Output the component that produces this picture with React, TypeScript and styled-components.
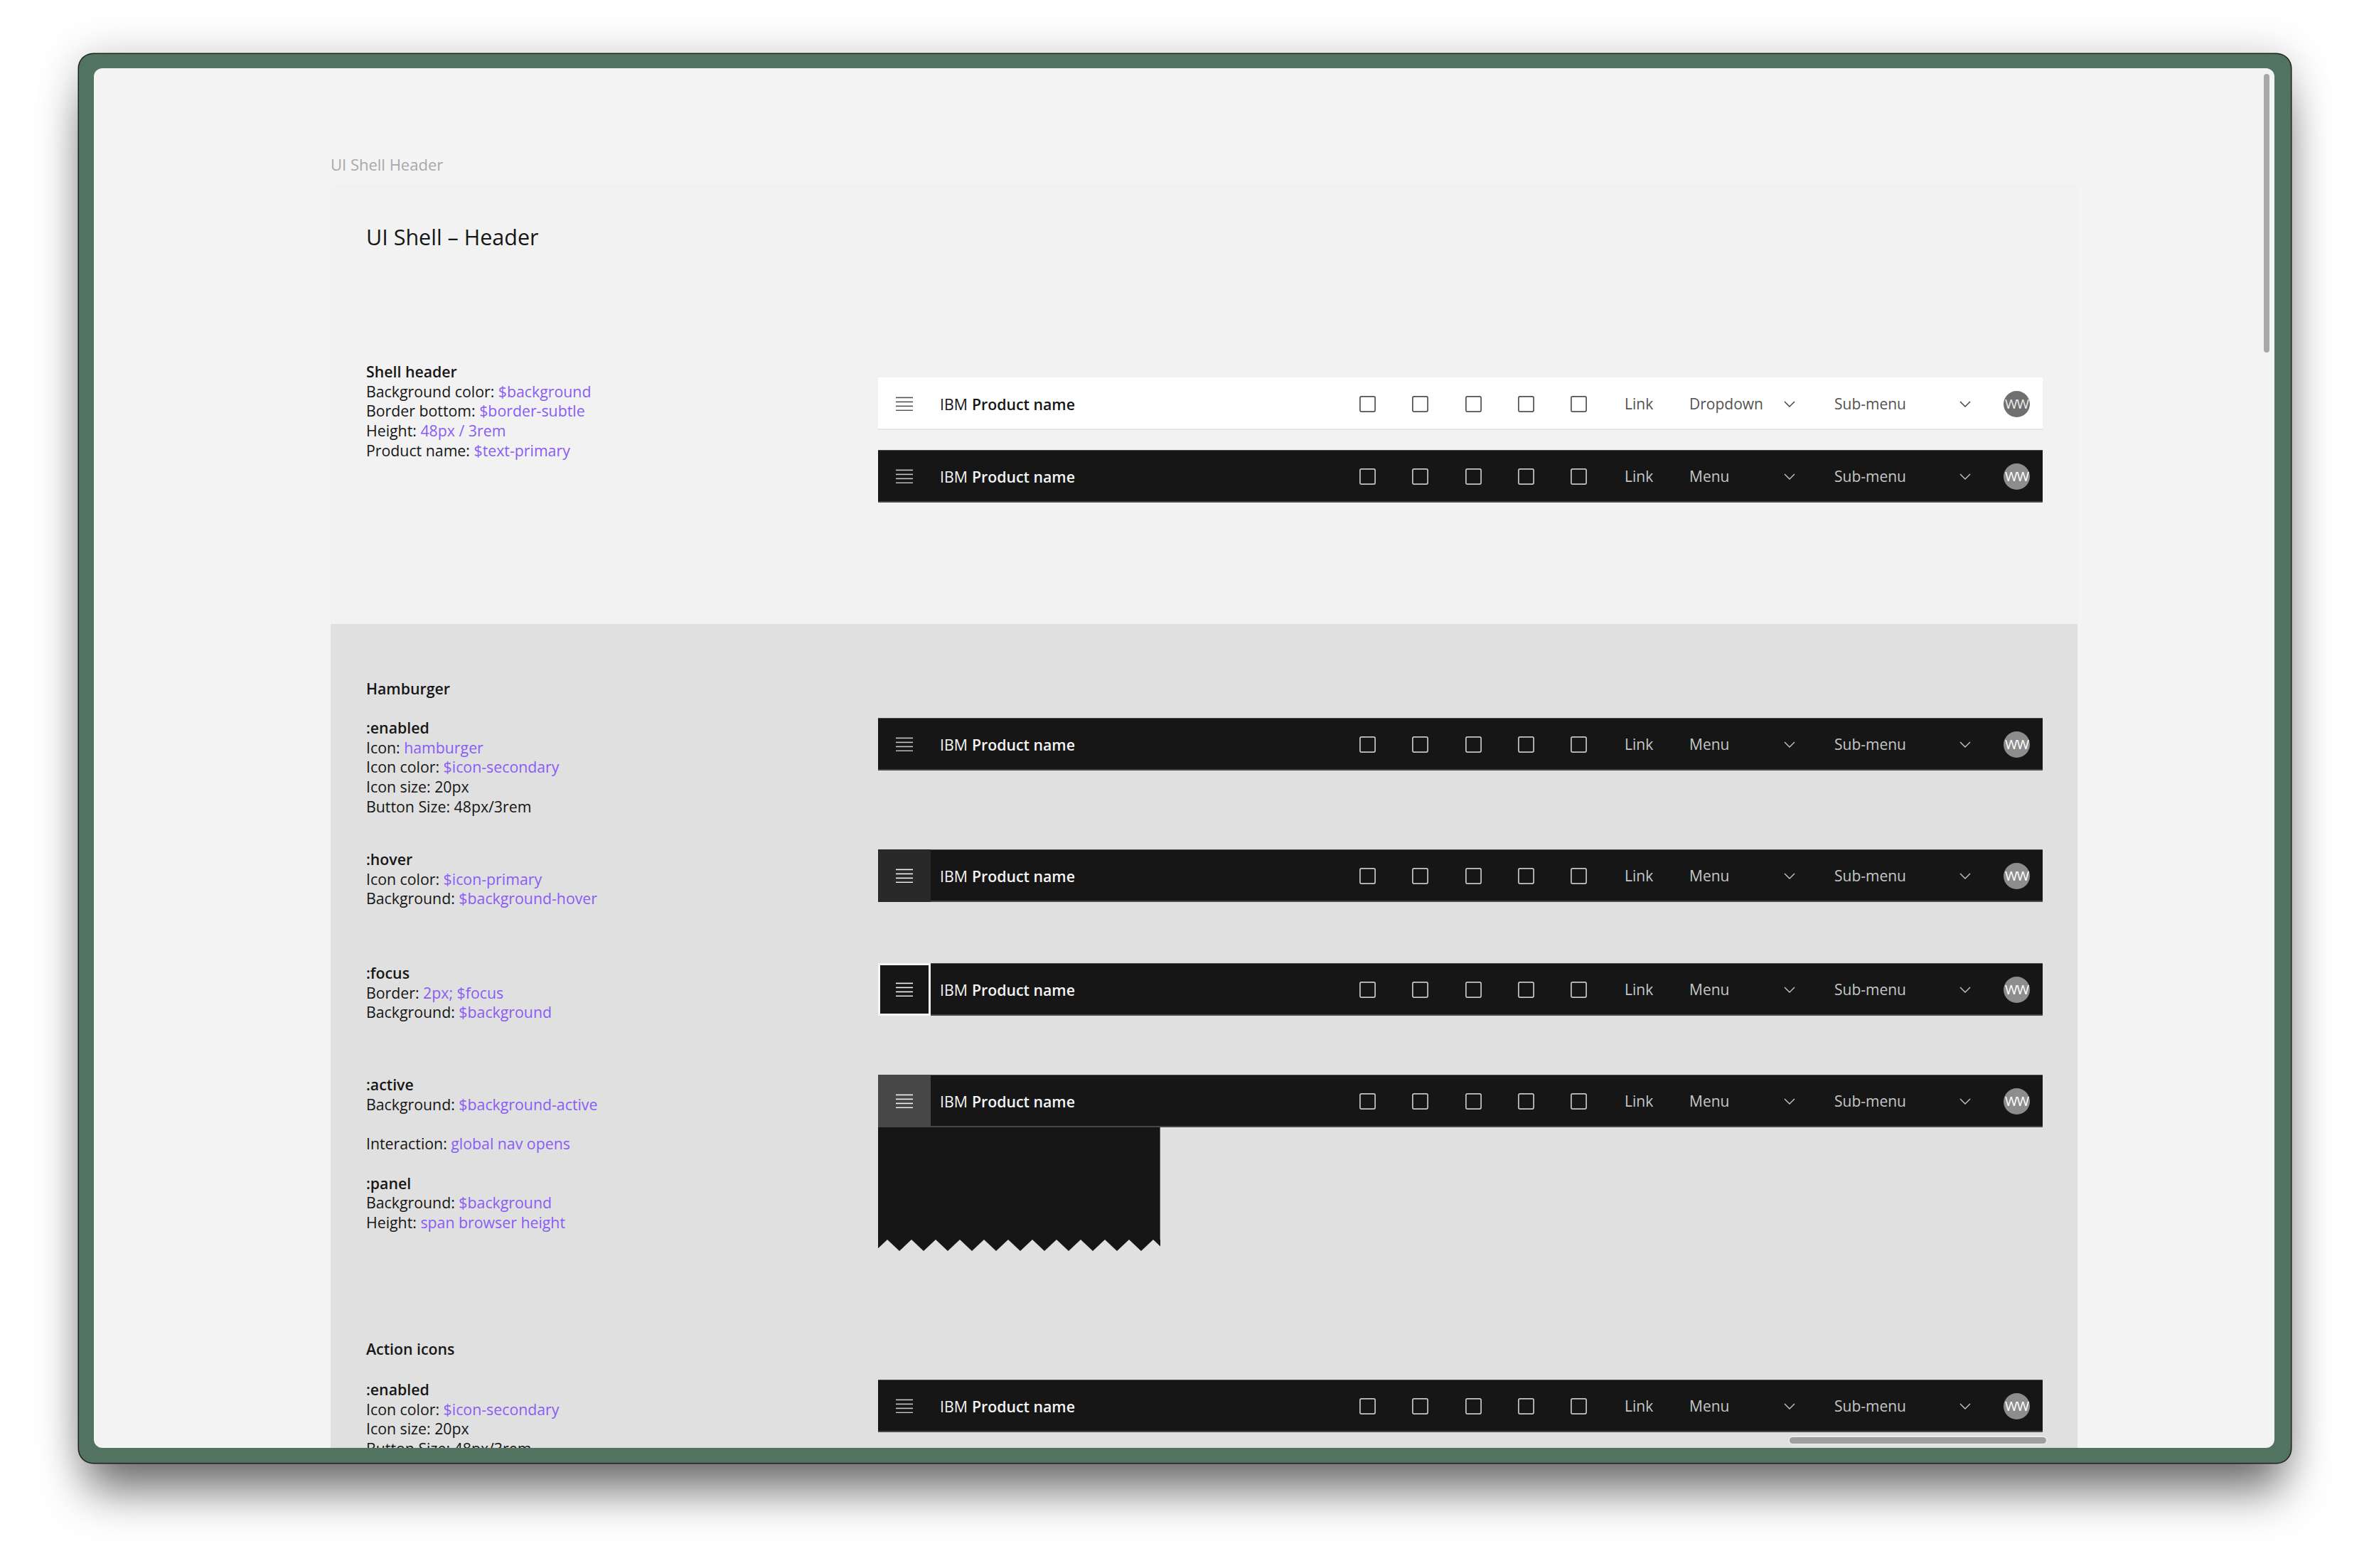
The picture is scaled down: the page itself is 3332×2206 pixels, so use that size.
import React from "react";
import styled, { createGlobalStyle } from "styled-components";

type Tone = "light" | "dark";
type BurgerState = "enabled" | "hover" | "focus" | "active";

const PURPLE = "#8a5cf6";
const LINE = 27.7;

const tones = {
    light: {
        bg: "#ffffff",
        edge: "inset 0 -2px 0 #e6e6e6",
        name: "#161616",
        text: "#525252",
        icon: "#525252",
        chevron: "#393939",
        avatar: "#6f6f6f",
        avatarText: "#ececec",
    },
    dark: {
        bg: "#161616",
        edge: "inset 0 1px 0 #4a4a4a, inset 0 -2px 0 #474747",
        name: "#f4f4f4",
        text: "#c6c6c6",
        icon: "#c6c6c6",
        chevron: "#c6c6c6",
        avatar: "#8d8d8d",
        avatarText: "#ffffff",
    },
};

const GlobalStyle = createGlobalStyle`
    html, body {
        margin: 0;
        padding: 0;
        background: #ffffff;
    }
    body {
        font-family: "Open Sans", "Noto Sans", sans-serif;
        -webkit-font-smoothing: antialiased;
    }
`;

const Page = styled.div`
    width: 3332px;
    height: 2206px;
    box-sizing: border-box;
    padding: 76px 0 0 111px;
    overflow: hidden;
`;

const Device = styled.div`
    width: 3111px;
    height: 1982px;
    box-sizing: border-box;
    padding: 20px 23px 21px 21px;
    background: #52735f;
    border-radius: 20px;
    box-shadow: 0 0 0 1.5px #1c1f1d, 0 52px 64px -12px rgba(0, 0, 0, 0.52),
        0 0 60px rgba(0, 0, 0, 0.2);
`;

const Screen = styled.div`
    position: relative;
    height: 100%;
    background: #f4f4f4;
    border-radius: 12px;
    overflow: hidden;
`;

const Canvas = styled.div`
    padding: 121px 0 0 333px;
`;

const FrameLabel = styled.div`
    font-size: 22px;
    line-height: 28px;
    color: #a8a8a8;
    margin-bottom: 13px;
`;

const Artboard = styled.div`
    width: 2457px;
`;

const TopSection = styled.div`
    height: 620px;
    box-sizing: border-box;
    padding-top: 55px;
    background: #f2f2f2;
`;

const GraySection = styled.div`
    padding: 77px 0 200px;
    background: #e0e0e0;
`;

const Title = styled.h1`
    margin: 0;
    padding-left: 50px;
    font-size: 30.5px;
    line-height: 40px;
    font-weight: 400;
    color: #161616;
`;

const SectionHeading = styled.div<{ $top?: number }>`
    padding-left: 50px;
    margin-top: ${p => p.$top ?? 0}px;
    font-size: 21.3px;
    line-height: ${LINE}px;
    font-weight: 600;
    color: #161616;
`;

const Row = styled.div<{ $top: number }>`
    display: grid;
    grid-template-columns: 720px 1638px;
    align-items: start;
    padding-left: 50px;
    margin-top: ${p => p.$top}px;
`;

const Notes = styled.div`
    font-size: 21.3px;
    line-height: ${LINE}px;
    color: #161616;
    white-space: nowrap;
`;

const Line = styled.div<{ $gap?: number }>`
    margin-top: ${p => (p.$gap ?? 0) * LINE}px;
`;

const Strong = styled.div<{ $gap?: number }>`
    font-weight: 600;
    margin-top: ${p => (p.$gap ?? 0) * LINE}px;
`;

const Token = styled.span`
    color: ${PURPLE};
`;

const HeaderStack = styled.div<{ $offset?: number }>`
    display: flex;
    flex-direction: column;
    gap: 28px;
    margin-top: ${p => p.$offset ?? 0}px;
`;

const Bar = styled.div<{ $tone: Tone }>`
    display: flex;
    align-items: stretch;
    height: 74px;
    background: ${p => tones[p.$tone].bg};
    box-shadow: ${p => tones[p.$tone].edge};
`;

const burgerBg: Record<BurgerState, string> = {
    enabled: "transparent",
    hover: "#292929",
    focus: "#161616",
    active: "#474747",
};

const BurgerButton = styled.div<{ $tone: Tone; $state: BurgerState }>`
    flex: none;
    width: 74px;
    display: flex;
    align-items: center;
    justify-content: center;
    background: ${p => burgerBg[p.$state]};
    color: ${p =>
        p.$tone === "light" ? tones.light.icon : p.$state === "enabled" ? "#c6c6c6" : "#f4f4f4"};
    box-shadow: ${p => (p.$state === "focus" ? "inset 0 0 0 3px #f4f4f4" : "none")};
`;

const ProductName = styled.div<{ $tone: Tone }>`
    display: flex;
    align-items: center;
    padding-left: 13px;
    font-size: 21.3px;
    color: ${p => tones[p.$tone].name};
    white-space: nowrap;

    b {
        font-weight: 600;
        margin-left: 6px;
    }
`;

const Spacer = styled.div`
    flex: 1;
`;

const ActionButton = styled.div<{ $tone: Tone }>`
    flex: none;
    width: 74.4px;
    display: flex;
    align-items: center;
    justify-content: center;
    color: ${p => tones[p.$tone].icon};
`;

const NavItem = styled.div<{ $tone: Tone; $width: number }>`
    flex: none;
    width: ${p => p.$width}px;
    box-sizing: border-box;
    display: flex;
    align-items: center;
    justify-content: space-between;
    padding: 0 28px 0 27px;
    font-size: 21px;
    color: ${p => tones[p.$tone].text};
    white-space: nowrap;

    svg {
        color: ${p => tones[p.$tone].chevron};
    }
`;

const AvatarButton = styled.div`
    flex: none;
    width: 73px;
    display: flex;
    align-items: center;
    justify-content: center;
`;

const Avatar = styled.div<{ $tone: Tone }>`
    width: 37px;
    height: 37px;
    border-radius: 50%;
    display: flex;
    align-items: center;
    justify-content: center;
    background: ${p => tones[p.$tone].avatar};
    color: ${p => tones[p.$tone].avatarText};
    font-size: 19px;
    letter-spacing: -1px;
`;

const Panel = styled.div`
    width: 397px;
`;

const PanelBody = styled.div`
    height: 158px;
    box-sizing: border-box;
    background: #161616;
    border-right: 1px solid #5a5a5a;
`;

const VScroll = styled.div`
    position: absolute;
    top: 8px;
    right: 7px;
    width: 8px;
    height: 392px;
    border-radius: 4px;
    background: #a8a8a8;
`;

const HScroll = styled.div`
    position: absolute;
    left: 2385px;
    top: 1926px;
    width: 361px;
    height: 9px;
    border-radius: 5px;
    background: #9e9e9e;
    box-shadow: 0 0 0 1.5px #ededed;
`;

const MenuIcon = () => (
    <svg width="24" height="20" viewBox="0 0 24 20" fill="currentColor">
        <rect x="0" y="0.6" width="24" height="1.6" />
        <rect x="0" y="6.6" width="24" height="1.6" />
        <rect x="0" y="12.6" width="24" height="1.6" />
        <rect x="0" y="18.6" width="24" height="1.6" />
    </svg>
);

const SquareIcon = () => (
    <svg width="23" height="23" viewBox="0 0 23 23" fill="none">
        <rect x="0.9" y="0.9" width="21.2" height="21.2" rx="2" stroke="currentColor" strokeWidth="1.7" />
    </svg>
);

const ChevronIcon = () => (
    <svg width="16" height="9" viewBox="0 0 16 9" fill="none">
        <path d="M1 1 L8 8 L15 1" stroke="currentColor" strokeWidth="1.4" />
    </svg>
);

const Zigzag = ({ width }: { width: number }) => {
    const pitch = 34;
    const depth = 16;
    const pts: string[] = ["0,0", `0,${(depth * 13) / 17}`];
    for (let x = 13; x < width; x += pitch) {
        pts.push(`${x},0`);
        if (x + pitch / 2 < width) pts.push(`${x + pitch / 2},${depth}`);
    }
    pts.push(`${width},${(depth * 10) / 17}`, `${width},0`);
    return (
        <svg width={width} height={depth} viewBox={`0 0 ${width} ${depth}`} style={{ display: "block" }}>
            <polygon points={pts.join(" ")} fill="#161616" />
        </svg>
    );
};

type HeaderProps = {
    tone?: Tone;
    burger?: BurgerState;
    menu?: string;
};

const ShellHeader = ({ tone = "dark", burger = "enabled", menu = "Menu" }: HeaderProps) => (
    <Bar $tone={tone}>
        <BurgerButton $tone={tone} $state={burger}>
            <MenuIcon />
        </BurgerButton>
        <ProductName $tone={tone}>
            IBM<b>Product name</b>
        </ProductName>
        <Spacer />
        {[0, 1, 2, 3, 4].map(i => (
            <ActionButton key={i} $tone={tone}>
                <SquareIcon />
            </ActionButton>
        ))}
        <NavItem $tone={tone} $width={91}>
            Link
        </NavItem>
        <NavItem $tone={tone} $width={204}>
            {menu}
            <ChevronIcon />
        </NavItem>
        <NavItem $tone={tone} $width={247}>
            Sub-menu
            <ChevronIcon />
        </NavItem>
        <AvatarButton>
            <Avatar $tone={tone}>WW</Avatar>
        </AvatarButton>
    </Bar>
);

const App = () => {
    return (
        <Page>
            <GlobalStyle />
            <Device>
                <Screen>
                    <Canvas>
                        <FrameLabel>UI Shell Header</FrameLabel>
                        <Artboard>
                            <TopSection>
                                <Title>UI Shell – Header</Title>
                                <Row $top={156}>
                                    <Notes>
                                        <Strong>Shell header</Strong>
                                        <Line>Background color: <Token>$background</Token></Line>
                                        <Line>Border bottom: <Token>$border-subtle</Token></Line>
                                        <Line>Height: <Token>48px / 3rem</Token></Line>
                                        <Line>Product name: <Token>$text-primary</Token></Line>
                                    </Notes>
                                    <HeaderStack $offset={22}>
                                        <ShellHeader tone="light" menu="Dropdown" />
                                        <ShellHeader />
                                    </HeaderStack>
                                </Row>
                            </TopSection>

                            <GraySection>
                                <SectionHeading>Hamburger</SectionHeading>
                                <Row $top={27.3}>
                                    <Notes>
                                        <Strong>:enabled</Strong>
                                        <Line>Icon: <Token>hamburger</Token></Line>
                                        <Line>Icon color: <Token>$icon-secondary</Token></Line>
                                        <Line>Icon size: 20px</Line>
                                        <Line>Button Size: 48px/3rem</Line>
                                    </Notes>
                                    <ShellHeader />
                                </Row>
                                <Row $top={46.5}>
                                    <Notes>
                                        <Strong>:hover</Strong>
                                        <Line>Icon color: <Token>$icon-primary</Token></Line>
                                        <Line>Background: <Token>$background-hover</Token></Line>
                                    </Notes>
                                    <ShellHeader burger="hover" />
                                </Row>
                                <Row $top={76.9}>
                                    <Notes>
                                        <Strong>:focus</Strong>
                                        <Line>Border: <Token>2px; $focus</Token></Line>
                                        <Line>Background: <Token>$background</Token></Line>
                                    </Notes>
                                    <ShellHeader burger="focus" />
                                </Row>
                                <Row $top={73.9}>
                                    <Notes>
                                        <Strong>:active</Strong>
                                        <Line>Background: <Token>$background-active</Token></Line>
                                        <Line $gap={1}>Interaction: <Token>global nav opens</Token></Line>
                                        <Strong $gap={1}>:panel</Strong>
                                        <Line>Background: <Token>$background</Token></Line>
                                        <Line>Height: <Token>span browser height</Token></Line>
                                    </Notes>
                                    <div>
                                        <ShellHeader burger="active" />
                                        <Panel>
                                            <PanelBody />
                                            <Zigzag width={397} />
                                        </Panel>
                                    </div>
                                </Row>

                                <SectionHeading $top={124}>Action icons</SectionHeading>
                                <Row $top={29.3}>
                                    <Notes>
                                        <Strong>:enabled</Strong>
                                        <Line>Icon color: <Token>$icon-secondary</Token></Line>
                                        <Line>Icon size: 20px</Line>
                                        <Line>Button Size: 48px/3rem</Line>
                                    </Notes>
                                    <ShellHeader />
                                </Row>
                            </GraySection>
                        </Artboard>
                    </Canvas>
                    <VScroll />
                    <HScroll />
                </Screen>
            </Device>
        </Page>
    );
};

export default App;
